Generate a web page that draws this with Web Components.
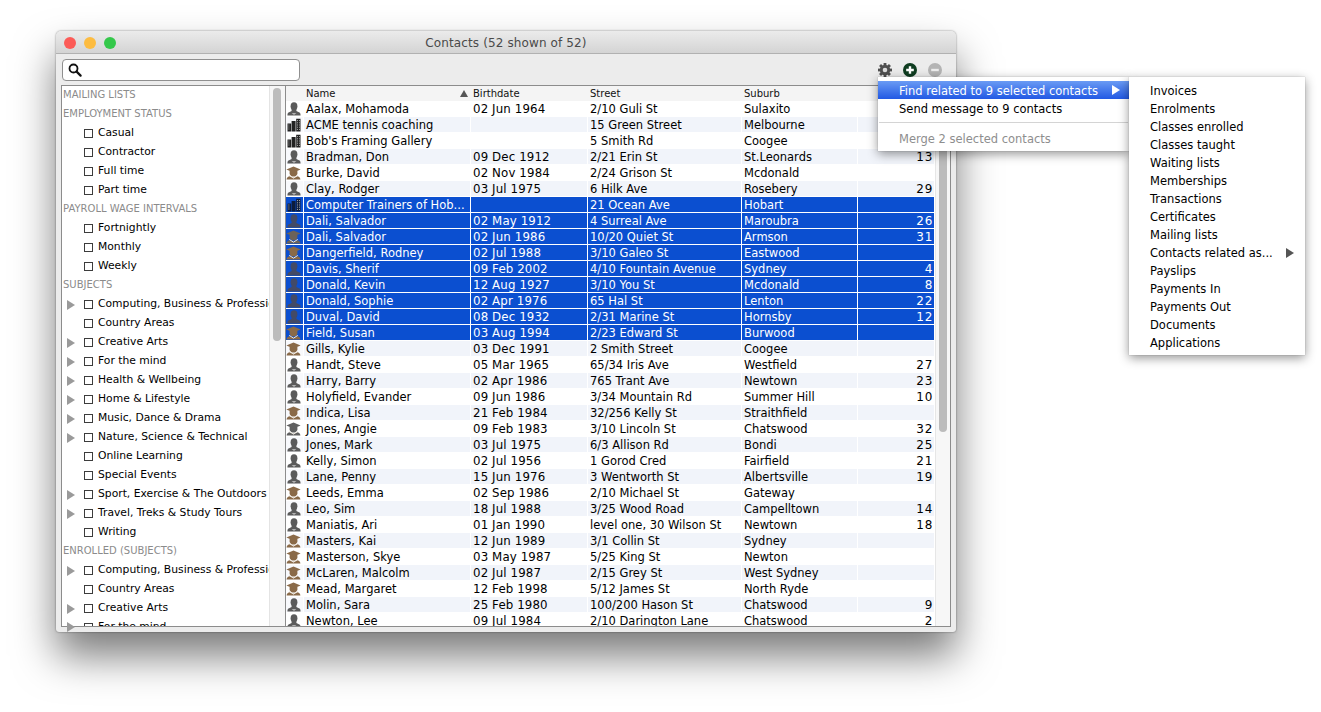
<!DOCTYPE html>
<html><head><meta charset="utf-8">
<style>
html,body{margin:0;padding:0;background:#fff;width:1321px;height:712px;overflow:hidden;font:12px "DejaVu Sans",sans-serif;color:#000}
.stage{position:relative;width:1321px;height:712px;overflow:hidden}
mac-window{position:absolute;left:56px;top:31px}
.menu-main{position:absolute;left:878px;top:77px;width:251px}
.menu-sub{position:absolute;left:1129px;top:77px;width:176px}
</style></head><body>
<div class="stage">
<mac-window title="Contacts (52 shown of 52)">
  <search-field slot="toolbar"></search-field>
  <tool-icons slot="toolbar"></tool-icons>
  <filter-tree></filter-tree>
  <contact-table></contact-table>
</mac-window>
<popup-menu class="menu-main" pad="4" padbottom="3">
  <menu-entry active arrow shift indent="21">Find related to 9 selected contacts</menu-entry>
  <menu-entry shift indent="21">Send message to 9 contacts</menu-entry>
  <menu-rule></menu-rule>
  <menu-entry disabled indent="21">Merge 2 selected contacts</menu-entry>
</popup-menu>
<popup-menu class="menu-sub" pad="5" padbottom="3">
  <menu-entry indent="21">Invoices</menu-entry>
  <menu-entry indent="21">Enrolments</menu-entry>
  <menu-entry indent="21">Classes enrolled</menu-entry>
  <menu-entry indent="21">Classes taught</menu-entry>
  <menu-entry indent="21">Waiting lists</menu-entry>
  <menu-entry indent="21">Memberships</menu-entry>
  <menu-entry indent="21">Transactions</menu-entry>
  <menu-entry indent="21">Certificates</menu-entry>
  <menu-entry indent="21">Mailing lists</menu-entry>
  <menu-entry arrow far indent="21">Contacts related as...</menu-entry>
  <menu-entry indent="21">Payslips</menu-entry>
  <menu-entry indent="21">Payments In</menu-entry>
  <menu-entry indent="21">Payments Out</menu-entry>
  <menu-entry indent="21">Documents</menu-entry>
  <menu-entry indent="21">Applications</menu-entry>
</popup-menu>
</div>
<script>
const FONT='"DejaVu Sans",sans-serif';
function shadow(el,html){el.attachShadow({mode:'open'}).innerHTML=html;return el.shadowRoot;}

class MacWindow extends HTMLElement{connectedCallback(){if(this.shadowRoot)return;
 shadow(this,`<style>
 :host{display:flex;flex-direction:column;width:900px;height:601px;background:#ececec;border-radius:5px 5px 3px 3px;box-shadow:0 24px 42px rgba(0,0,0,.52),0 0 2px rgba(0,0,0,.5);box-sizing:border-box;overflow:visible}
 .title{height:23px;box-sizing:border-box;padding-top:2px;flex:none;display:flex;align-items:center;justify-content:center;position:relative;background:linear-gradient(#ebebeb,#d4d4d4);border-bottom:1px solid #b1b1b1;border-radius:5px 5px 0 0;color:#4a4a4a;font:12px ${FONT};letter-spacing:.12px}
 .lights{position:absolute;left:8px;top:6px;display:flex;gap:8px}
 .lights i{display:block;width:12px;height:12px;border-radius:50%}
 .toolbar{height:31px;flex:none;display:flex;justify-content:space-between;align-items:center;padding:0 14px 0 6px;box-sizing:border-box}
 .body{flex:1;min-height:0;display:flex;padding:0 5px 5px;box-sizing:border-box}
 </style>
 <div class="title"><div class="lights"><i style="background:#fc5b57"></i><i style="background:#fdbc40"></i><i style="background:#34c84a"></i></div><span>${this.getAttribute('title')}</span></div>
 <div class="toolbar"><slot name="toolbar"></slot></div>
 <div class="body"><slot></slot></div>`);
}}
class SearchField extends HTMLElement{connectedCallback(){if(this.shadowRoot)return;
 shadow(this,`<style>:host{display:flex;align-items:center;width:238px;height:22px;box-sizing:border-box;background:#fff;border:1px solid #8f8f8f;border-radius:4px;padding-left:5px}svg{display:block}</style>
 <svg width="14" height="14" viewBox="0 0 14 14"><circle cx="5.5" cy="5.5" r="4" fill="none" stroke="#111" stroke-width="1.8"/><path d="M8.6 8.6L12.6 12.6" stroke="#111" stroke-width="2.2" stroke-linecap="round"/></svg>`);
}}
class ToolIcons extends HTMLElement{connectedCallback(){if(this.shadowRoot)return;
 const teeth=[0,45,90,135].map(a=>`<rect x="5.6" y="0" width="2.8" height="14" fill="#4f4f4f" transform="rotate(${a} 7 7)"/>`).join('');
 shadow(this,`<style>:host{display:flex;gap:11px;align-items:center}svg{display:block}</style>
 <svg width="14" height="14" viewBox="0 0 14 14">${teeth}<circle cx="7" cy="7" r="5.2" fill="#4f4f4f"/><circle cx="7" cy="7" r="2.3" fill="#ddd"/></svg>
 <svg width="14" height="14" viewBox="0 0 14 14"><circle cx="7" cy="7" r="7" fill="#0f3d20"/><path d="M7 3.2v7.6M3.2 7h7.6" stroke="#fff" stroke-width="2.4"/></svg>
 <svg width="14" height="14" viewBox="0 0 14 14"><circle cx="7" cy="7" r="7" fill="#b4b4b4"/><path d="M3.2 7h7.6" stroke="#eee" stroke-width="2.4"/></svg>`);
}}
const TREE=[['h','Mailing lists'],['h','Employment status'],['c','Casual'],['c','Contractor'],['c','Full time'],['c','Part time'],['h','Payroll wage intervals'],['c','Fortnightly'],['c','Monthly'],['c','Weekly'],['h','Subjects'],['a','Computing, Business & Professional'],['c','Country Areas'],['a','Creative Arts'],['a','For the mind'],['a','Health & Wellbeing'],['a','Home & Lifestyle'],['a','Music, Dance & Drama'],['a','Nature, Science & Technical'],['c','Online Learning'],['c','Special Events'],['a','Sport, Exercise & The Outdoors'],['a','Travel, Treks & Study Tours'],['c','Writing'],['h','Enrolled (subjects)'],['a','Computing, Business & Professional'],['c','Country Areas'],['a','Creative Arts'],['a','For the mind']];
class FilterTree extends HTMLElement{connectedCallback(){if(this.shadowRoot)return;
 const esc=s=>s.replace(/&/g,'&amp;');
 const rows=TREE.map(([k,t])=>k==='h'?`<div class="row head">${esc(t)}</div>`:`<div class="row item">${k==='a'?'<b class="arrow"></b>':''}<i class="box"></i><span>${esc(t)}</span></div>`).join('');
 shadow(this,`<style>
 :host{display:flex;width:224px;flex:none;box-sizing:border-box;border:1px solid #8c8c8c;border-right:0;background:#fff;position:relative}
 .list{width:207px;flex:none;overflow:hidden;font:10.75px ${FONT};padding-top:0}
 .inner{margin-top:-1px}
 .row{height:19px;display:flex;align-items:center;white-space:nowrap;position:relative}
 .head{color:#8b8b8b;font-size:10px;padding-left:1px;text-transform:uppercase}
 .item{padding-left:22px}
 .box{border:1px solid #3c3c3c;box-sizing:content-box;flex:none;margin-right:5px;background:#fff;width:7px;height:7px;margin-top:1px}
 .arrow{position:absolute;left:5px;top:6px;width:0;height:0;border-left:8px solid #9a9a9a;border-top:5px solid transparent;border-bottom:5px solid transparent}
 .track{flex:1;background:#f6f6f6;border-left:1px solid #e4e4e4;position:relative}
 .thumb{position:absolute;left:3px;top:2px;width:8px;height:253px;background:#bcbcbc;border-radius:4px}
 .leak{position:absolute;left:5px;bottom:-6px;width:0;height:0;border-left:8px solid #9a9a9a;border-top:5px solid transparent;border-bottom:5px solid transparent}
 </style><div class="list"><div class="inner">${rows}</div></div><div class="track"><div class="thumb"></div></div><b class="leak"></b>`);
}}
const ICON={
 p:(c='#5b5b5b',collar='#cfcfcf')=>`<svg width="14" height="14" viewBox="0 0 14 14"><ellipse cx="7" cy="4.2" rx="3.4" ry="4" fill="${c}"/><path d="M4.6 6.5h4.8v2.6l3 1.3c.8.3 1.2 1.4 1.2 3.1H.4c0-1.7.4-2.8 1.2-3.1l3-1.3z" fill="${c}"/><path d="M4.6 11h4.8L7 13z" fill="${collar}" opacity=".75"/></svg>`,
 t:(c='#8a6a48')=>`<svg width="15" height="14" viewBox="0 0 15 14"><path d="M7.5 .4L14.6 3.6 7.5 6.6 .4 3.6z" fill="${c}"/><path d="M3.6 5h7.8v3C10.8 9.6 9.1 10.6 7.5 10.6S4.2 9.6 3.6 8z" fill="${c}"/><path d="M.6 13.6c0-1.8 1-2.6 2.8-3.4l4.1 1.6 4.1-1.6c1.8.8 2.8 1.6 2.8 3.4z" fill="${c}"/><path d="M3.2 9.4l4.3 2.8 4.3-2.8" fill="none" stroke="#eee8df" stroke-width="1"/></svg>`,
 b:(c='#222')=>`<svg width="14" height="14" viewBox="0 0 14 14"><path d="M.5 5.5h3.6v8H.5zM4.6 3h4v10.5h-4zM9.2 .8h4.3v12.7H9.2z" fill="${c}"/><path d="M1.4 7h1M1.4 9h1M1.4 11h1M10 2.6h1M12 2.6h1M10 4.8h1M12 4.8h1M10 7h1M12 7h1M10 9.2h1M12 9.2h1M10 11.4h1M12 11.4h1" stroke="#aaa" stroke-width="1"/></svg>`
};
const DATA=`p|Aalax, Mohamoda|02 Jun 1964|2/10 Guli St|Sulaxito|
b|ACME tennis coaching||15 Green Street|Melbourne|
b|Bob's Framing Gallery||5 Smith Rd|Coogee|
p|Bradman, Don|09 Dec 1912|2/21 Erin St|St.Leonards|13
t|Burke, David|02 Nov 1984|2/24 Grison St|Mcdonald|
p|Clay, Rodger|03 Jul 1975|6 Hilk Ave|Rosebery|29
B|Computer Trainers of Hob...||21 Ocean Ave|Hobart|
P|Dali, Salvador|02 May 1912|4 Surreal Ave|Maroubra|26
G|Dali, Salvador|02 Jun 1986|10/20 Quiet St|Armson|31
T|Dangerfield, Rodney|02 Jul 1988|3/10 Galeo St|Eastwood|
P|Davis, Sherif|09 Feb 2002|4/10 Fountain Avenue|Sydney|4
P|Donald, Kevin|12 Aug 1927|3/10 You St|Mcdonald|8
P|Donald, Sophie|02 Apr 1976|65 Hal St|Lenton|22
P|Duval, David|08 Dec 1932|2/31 Marine St|Hornsby|12
T|Field, Susan|03 Aug 1994|2/23 Edward St|Burwood|
t|Gills, Kylie|03 Dec 1991|2 Smith Street|Coogee|
p|Handt, Steve|05 Mar 1965|65/34 Iris Ave|Westfield|27
p|Harry, Barry|02 Apr 1986|765 Trant Ave|Newtown|23
p|Holyfield, Evander|09 Jun 1986|3/34 Mountain Rd|Summer Hill|10
t|Indica, Lisa|21 Feb 1984|32/256 Kelly St|Straithfield|
g|Jones, Angie|09 Feb 1983|3/10 Lincoln St|Chatswood|32
p|Jones, Mark|03 Jul 1975|6/3 Allison Rd|Bondi|25
p|Kelly, Simon|02 Jul 1956|1 Gorod Cred|Fairfield|21
p|Lane, Penny|15 Jun 1976|3 Wentworth St|Albertsville|19
t|Leeds, Emma|02 Sep 1986|2/10 Michael St|Gateway|
p|Leo, Sim|18 Jul 1988|3/25 Wood Road|Campelltown|14
p|Maniatis, Ari|01 Jan 1990|level one, 30 Wilson St|Newtown|18
t|Masters, Kai|12 Jun 1989|3/1 Collin St|Sydney|
t|Masterson, Skye|03 May 1987|5/25 King St|Newton|
t|McLaren, Malcolm|02 Jul 1987|2/15 Grey St|West Sydney|
t|Mead, Margaret|12 Feb 1998|5/12 James St|North Ryde|
p|Molin, Sara|25 Feb 1980|100/200 Hason St|Chatswood|9
p|Newton, Lee|09 Jul 1984|2/10 Darington Lane|Chatswood|2`.split('\n').map(l=>l.split('|'));
const iconFor=k=>({p:ICON.p(),P:ICON.p('#434a66','#434a66'),t:ICON.t(),T:ICON.t(),g:ICON.t('#5f5f5f'),G:ICON.t('#6b6258'),b:ICON.b(),B:ICON.b('#0c1c3c')}[k]);
class ContactTable extends HTMLElement{connectedCallback(){if(this.shadowRoot)return;
 const rows=DATA.map(([k,n,d,s,u,x],i)=>{const sel=k<='Z';return `<div class="tr ${sel?'sel':i%2?'alt':''}"><div class="ic">${iconFor(k)}</div><div class="td">${n}</div><div class="td date">${d}</div><div class="td">${s}</div><div class="td">${u}</div><div class="td num">${x}</div></div>`}).join('');
 shadow(this,`<style>
 :host{display:flex;flex:1;min-width:0;box-sizing:border-box;border:1px solid #8c8c8c;background:#fff;font:11.5px ${FONT}}
 .table{width:649px;flex:none;overflow:hidden}
 .thead,.tr{display:grid;grid-template-columns:18px 167px 117px 154px 116px 77px}
 .thead{height:15px;background:#f4f4f4;font-size:10px;line-height:15px;color:#111}
 .th{padding-left:2px;position:relative}
 .tr{height:16px;grid-auto-rows:16px;line-height:15px}
 .td{height:16px;padding:1px 0 0 2px;border:solid #fff;border-width:0 1px 1px 0;white-space:nowrap;box-sizing:border-box;background:inherit}
 .date{font-size:11.8px;letter-spacing:.12px}
 .num{text-align:right;padding:1px 1px 0 0;font-size:12px;letter-spacing:.7px}
 .ic{height:16px;border:solid #fff;border-width:0 1px 1px 0;box-sizing:border-box;display:flex;justify-content:center;align-items:center;overflow:hidden;background:inherit;padding-right:2px}
 .ic svg{display:block;flex:none}
 .alt{background:#f1f4fa}.alt .ic{background:#f8f9fc}
 .sel{background:#0b4fd0;color:#fff}
 .sort{position:absolute;right:3px;top:4px;width:0;height:0;border-left:4px solid transparent;border-right:4px solid transparent;border-bottom:7px solid #555}
 .track{flex:1;background:#f7f7f7;border-left:1px solid #e6e6e6;position:relative}
 .thumb{position:absolute;left:3px;top:2px;width:8px;height:344px;background:#bcbcbc;border-radius:4px}
 </style><div class="table"><div class="thead"><div></div><div class="th">Name<b class="sort"></b></div><div class="th">Birthdate</div><div class="th">Street</div><div class="th">Suburb</div><div class="th"></div></div>${rows}</div><div class="track"><div class="thumb"></div></div>`);
}}
class PopupMenu extends HTMLElement{connectedCallback(){if(this.shadowRoot)return;
 shadow(this,`<style>:host{display:block;box-sizing:border-box;background:#fff;padding:${this.getAttribute('pad')}px 0 ${this.getAttribute('padbottom')}px;box-shadow:0 3px 10px rgba(0,0,0,.42),0 0 1px rgba(0,0,0,.3);font:11.5px ${FONT}}</style><slot></slot>`);
}}
class MenuEntry extends HTMLElement{connectedCallback(){if(this.shadowRoot)return;
 const active=this.hasAttribute('active'),dis=this.hasAttribute('disabled');
 const col=active?'#fff':dis?'#8e8e8e':'#000';
 const right=this.hasAttribute('far')?11:9;
 shadow(this,`<style>:host{display:flex;align-items:center;box-sizing:border-box;height:18px;padding-top:${this.hasAttribute('shift')?2:0}px;padding-left:${this.getAttribute('indent')}px;padding-right:9px;position:relative;color:${col};${active?'background:linear-gradient(#6a9bf4,#2259e4);':''}}
 .a{position:absolute;right:${right}px;top:4px;width:0;height:0;border-left:8px solid ${active?'#fff':'#555'};border-top:5px solid transparent;border-bottom:5px solid transparent}</style><slot></slot>${this.hasAttribute('arrow')?'<b class="a"></b>':''}`);
}}
class MenuRule extends HTMLElement{connectedCallback(){if(this.shadowRoot)return;
 shadow(this,`<style>:host{display:block;height:13px;position:relative}i{position:absolute;left:1px;right:1px;top:5px;height:1px;background:#d4d4d4}</style><i></i>`);
}}
customElements.define('mac-window',MacWindow);
customElements.define('search-field',SearchField);
customElements.define('tool-icons',ToolIcons);
customElements.define('filter-tree',FilterTree);
customElements.define('contact-table',ContactTable);
customElements.define('popup-menu',PopupMenu);
customElements.define('menu-entry',MenuEntry);
customElements.define('menu-rule',MenuRule);
</script>
</body></html>
